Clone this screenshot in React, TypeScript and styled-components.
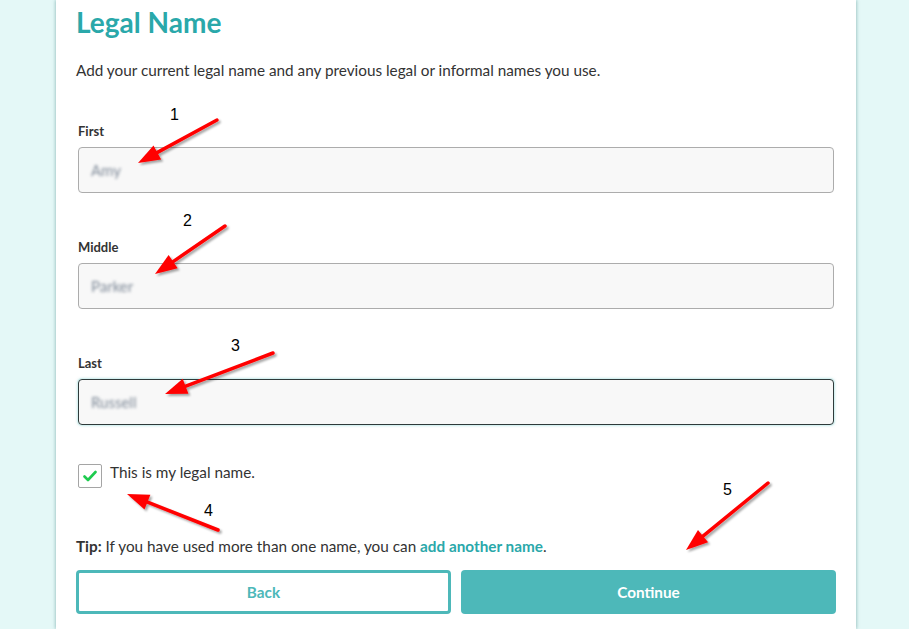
import React from "react";
import styled, { createGlobalStyle } from "styled-components";

const Global = createGlobalStyle`
  html, body { margin: 0; padding: 0; }
  body {
    background: #e4f8f7;
    font-family: "Source Sans Pro", "Lato", "Noto Sans", sans-serif;
    overflow: hidden;
  }
`;

const Page = styled.div`
  position: relative;
  width: 909px;
  height: 629px;
  overflow: hidden;
`;

const Panel = styled.main`
  margin-left: 56px;
  width: 800px;
  min-height: 629px;
  background: #ffffff;
  box-shadow: -1px 0 3px rgba(80, 140, 140, 0.35), 1px 0 3px rgba(80, 140, 140, 0.35);
  padding: 0 20px;
  box-sizing: border-box;
  display: flex;
  flex-direction: column;
`;

const Title = styled.h1`
  margin: 4px 0 0;
  font-size: 28px;
  font-weight: 700;
  color: #2aa8aa;
  line-height: 36px;
`;

const Intro = styled.p`
  margin: 20px 0 0;
  font-size: 15.3px;
  line-height: 20px;
  color: #333;
`;

const Fields = styled.div`
  display: flex;
  flex-direction: column;
  padding: 0 2px;
  margin-top: 43px;
  gap: 46px;
`;

const Field = styled.label`
  display: flex;
  flex-direction: column;
  gap: 8px;
`;

const Label = styled.span`
  font-size: 13px;
  font-weight: 700;
  color: #333;
  line-height: 16px;
`;

const Input = styled.div<{ $focused?: boolean }>`
  height: 46px;
  box-sizing: border-box;
  border: 1px solid ${(p) => (p.$focused ? "#2f3a3a" : "#acacac")};
  border-radius: 4px;
  background: #f8f8f8;
  box-shadow: ${(p) => (p.$focused ? "0 0 0 1px #d6f1f1, 0 0 3px rgba(42,168,170,0.5)" : "none")};
  display: flex;
  align-items: center;
  padding: 0 12px;
`;

const Blurred = styled.span`
  font-size: 15px;
  color: #7f8a98;
  filter: blur(1.4px);
  user-select: none;
`;

const CheckRow = styled.div`
  display: flex;
  align-items: flex-start;
  gap: 8px;
  margin: 38px 0 0 2px;
`;

const Box = styled.span`
  width: 24px;
  height: 24px;
  box-sizing: border-box;
  border: 1px solid #a5a5a5;
  border-radius: 2px;
  background: #fff;
  display: flex;
  align-items: center;
  justify-content: center;
  margin-top: 1px;
`;

const CheckText = styled.span`
  font-size: 15.3px;
  color: #333;
  line-height: 18px;
`;

const Tip = styled.p`
  margin: 48px 0 0;
  font-size: 15.3px;
  line-height: 20px;
  color: #333;
  b { font-weight: 700; }
`;

const Link = styled.a`
  color: #2aa8aa;
  font-weight: 700;
  text-decoration: none;
`;

const Buttons = styled.div`
  display: grid;
  grid-template-columns: 1fr 1fr;
  gap: 10px;
  margin-top: 14px;
`;

const Button = styled.button<{ $primary?: boolean }>`
  height: 44px;
  border-radius: 4px;
  font-family: inherit;
  font-size: 15.3px;
  font-weight: 700;
  cursor: pointer;
  border: ${(p) => (p.$primary ? "none" : "3px solid #4db8b9")};
  background: ${(p) => (p.$primary ? "#4db8b9" : "#fff")};
  color: ${(p) => (p.$primary ? "#fff" : "#4db8b9")};
`;

const Overlay = styled.svg`
  position: absolute;
  left: 0;
  top: 0;
  pointer-events: none;
`;

const Num = styled.text`
  font-family: "Liberation Sans", Arial, sans-serif;
  font-size: 16px;
  fill: #000;
`;

type Arrow = { x1: number; y1: number; x2: number; y2: number; n: string; nx: number; ny: number };

const arrows: Arrow[] = [
  { x1: 217, y1: 120, x2: 138, y2: 163, n: "1", nx: 170, ny: 120 },
  { x1: 225, y1: 226, x2: 155, y2: 274, n: "2", nx: 183, ny: 226 },
  { x1: 273, y1: 353, x2: 165, y2: 394, n: "3", nx: 231, ny: 351 },
  { x1: 218, y1: 530, x2: 127, y2: 494, n: "4", nx: 204, ny: 516 },
  { x1: 768, y1: 483, x2: 686, y2: 550, n: "5", nx: 723, ny: 495 },
];

function ArrowShape({ a }: { a: Arrow }) {
  const dx = a.x2 - a.x1;
  const dy = a.y2 - a.y1;
  const len = Math.hypot(dx, dy);
  const ux = dx / len;
  const uy = dy / len;
  const head = 22;
  const half = 8;
  const bx = a.x2 - ux * head;
  const by = a.y2 - uy * head;
  const px = -uy;
  const py = ux;
  const pts = `${a.x2},${a.y2} ${bx + px * half},${by + py * half} ${bx - px * half},${by - py * half}`;
  return (
    <g>
      <g filter="url(#sh)">
        <line x1={a.x1} y1={a.y1} x2={bx + ux * 4} y2={by + uy * 4} stroke="#ff0000" strokeWidth={3.5} strokeLinecap="round" />
        <polygon points={pts} fill="#ff0000" />
      </g>
      <Num x={a.nx} y={a.ny}>{a.n}</Num>
    </g>
  );
}

export default function App() {
  return (
    <Page>
      <Global />
      <Panel>
        <Title>Legal Name</Title>
        <Intro>Add your current legal name and any previous legal or informal names you use.</Intro>
        <Fields>
          <Field>
            <Label>First</Label>
            <Input><Blurred>Amy</Blurred></Input>
          </Field>
          <Field>
            <Label>Middle</Label>
            <Input><Blurred>Parker</Blurred></Input>
          </Field>
          <Field>
            <Label>Last</Label>
            <Input $focused><Blurred>Russell</Blurred></Input>
          </Field>
        </Fields>
        <CheckRow>
          <Box>
            <svg width="14" height="12" viewBox="0 0 14 12">
              <path d="M1.5 6.5 L5 10 L12.5 2" fill="none" stroke="#1ecb4f" strokeWidth="2.6" strokeLinecap="round" strokeLinejoin="round" />
            </svg>
          </Box>
          <CheckText>This is my legal name.</CheckText>
        </CheckRow>
        <Tip>
          <b>Tip:</b> If you have used more than one name, you can <Link href="#">add another name</Link>.
        </Tip>
        <Buttons>
          <Button>Back</Button>
          <Button $primary>Continue</Button>
        </Buttons>
      </Panel>
      <Overlay width="909" height="629">
        <defs>
          <filter id="sh" x="-20%" y="-20%" width="140%" height="140%">
            <feDropShadow dx="2" dy="2" stdDeviation="1.2" floodColor="#000" floodOpacity="0.35" />
          </filter>
        </defs>
        {arrows.map((a) => (
          <ArrowShape key={a.n} a={a} />
        ))}
      </Overlay>
    </Page>
  );
}
